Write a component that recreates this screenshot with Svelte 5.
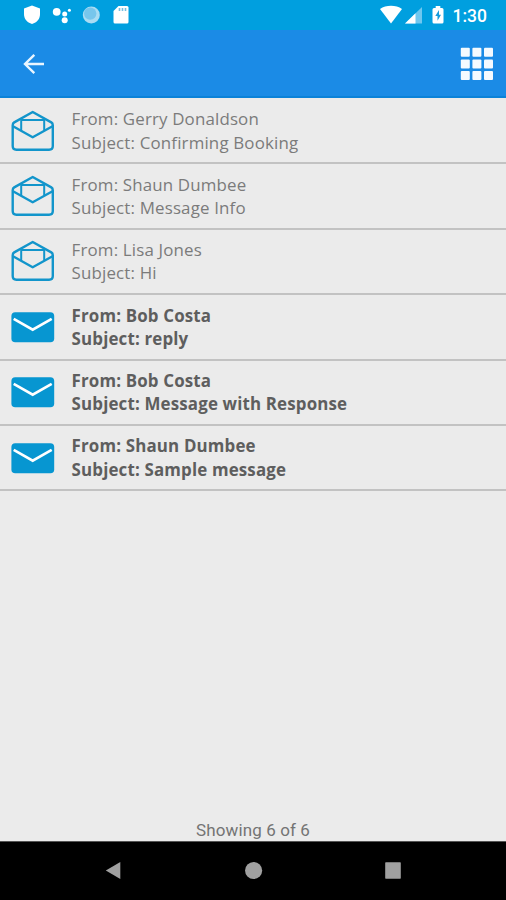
<script>
  const messages = [
    { from: "Gerry Donaldson", subject: "Confirming Booking", read: true },
    { from: "Shaun Dumbee", subject: "Message Info", read: true },
    { from: "Lisa Jones", subject: "Hi", read: true },
    { from: "Bob Costa", subject: "reply", read: false },
    { from: "Bob Costa", subject: "Message with Response", read: false },
    { from: "Shaun Dumbee", subject: "Sample message", read: false },
  ];
</script>

<div class="screen">
  <div class="status-bar">
    <svg class="status-left" width="112" height="30" viewBox="0 0 112 30">
      <!-- Shield -->
      <path d="M8 5.5 L16 8.5 V14 C16 19 13 22.3 8 24 C3 22.3 0 19 0 14 V8.5 Z" fill="#fff" />
      <!-- Assistant dots -->
      <circle cx="32.7" cy="11.8" r="3.9" fill="#fff" />
      <circle cx="40.7" cy="14" r="2.5" fill="#fff" />
      <circle cx="40.7" cy="20.3" r="3" fill="#fff" />
      <circle cx="45.4" cy="10.2" r="1.5" fill="#fff" />
      <!-- Sync circle -->
      <circle cx="67.3" cy="15" r="8.5" fill="#a9dcf3" />
      <circle cx="66.2" cy="13.6" r="6.2" fill="#77c6ec" />
      <!-- SD card -->
      <path d="M94.5 6 H103 Q104.5 6 104.5 7.5 V22 Q104.5 23.5 103 23.5 H91 Q89.5 23.5 89.5 22 V11 Z" fill="#fff" />
      <path d="M95.5 8 V11 M98.5 8 V11 M101.5 8 V11" stroke="#79bfe0" stroke-width="1.6" />
    </svg>
    <div class="status-right">
      <svg width="66" height="30" viewBox="0 0 66 30">
        <path d="M0 9 C6 4.8 16 4.8 22 9 L11 23.5 Z" fill="#fff" />
        <path d="M42 7 V23.5 H25 Z" fill="#6fc7ef" />
        <path d="M35.5 13.3 V23.5 H25 Z" fill="#fff" />
        <path d="M55.7 6 H60.3 V8 H62 Q63.5 8 63.5 9.5 V22 Q63.5 23.5 62 23.5 H54 Q52.5 23.5 52.5 22 V9.5 Q52.5 8 54 8 H55.7 Z" fill="#fff" />
        <path d="M59 10 L55.3 16 H57.5 V20.8 L61 14.8 H59 Z" fill="#159bdc" />
      </svg>
      <span class="clock">1:30</span>
    </div>
  </div>

  <div class="header">
    <button class="icon-button" aria-label="Back">
      <svg width="22" height="22" viewBox="0 0 22 22">
        <path d="M21 11 H2.5 M11.3 1.8 L2 11 L11.3 20.2" fill="none" stroke="#e9f5ff" stroke-width="2.4" />
      </svg>
    </button>
    <button class="icon-button" aria-label="Menu">
      <svg width="34" height="34" viewBox="0 0 34 34">
        {#each [0.8, 12.4, 24] as y}
          {#each [0.8, 12.4, 24] as x}
            <rect {x} {y} width="9" height="9" rx="1" fill="#f5faff" />
          {/each}
        {/each}
      </svg>
    </button>
  </div>

  <div class="messages">
    {#each messages as message}
      <div class="message" class:unread={!message.read}>
        <svg class="envelope" width="44" height="44" viewBox="0 0 44 44">
          {#if message.read}
            <g fill="none" stroke="#1295cb" stroke-width="2.4" stroke-linejoin="round">
              <path d="M1.7 16.2 Q1.7 14.3 3.2 13.4 L21.7 3 L40.3 13.4 Q41.8 14.3 41.8 16.2 V37 Q41.8 40.7 38.1 40.7 H5.4 Q1.7 40.7 1.7 37 Z" />
              <path d="M2 17.2 L21.7 28.2 L41.5 17.2" />
              <path d="M10.2 21.3 V10.9 H33.2 V21.3" stroke-width="2" />
            </g>
          {:else}
            <rect x="0.4" y="7.2" width="42.8" height="30" rx="3.8" fill="#0796d1" />
            <path d="M2.7 13.9 L21.7 24.6 L40.7 13.9" fill="none" stroke="#fff" stroke-width="2.7" />
          {/if}
        </svg>
        <div class="text">
          <div>From: {message.from}</div>
          <div>Subject: {message.subject}</div>
        </div>
      </div>
    {/each}
  </div>

  <div class="footer">Showing 6 of 6</div>

  <div class="nav-bar">
    <svg width="18" height="20" viewBox="0 0 18 20">
      <path d="M0.8 9.5 L15.3 1 V18 Z" fill="#a0a0a0" />
    </svg>
    <svg width="18" height="20" viewBox="0 0 18 20">
      <circle cx="8.6" cy="9.5" r="8.6" fill="#a0a0a0" />
    </svg>
    <svg width="18" height="20" viewBox="0 0 18 20">
      <rect x="1.2" y="1.3" width="15.6" height="16.4" rx="0.6" fill="#a0a0a0" />
    </svg>
  </div>
</div>

<style>
  :global(body) {
    margin: 0;
  }

  .screen {
    display: flex;
    flex-direction: column;
    width: 506px;
    height: 900px;
    overflow: hidden;
    background: #ebebeb;
    font-family: "Open Sans", sans-serif;
  }

  .status-bar {
    display: flex;
    justify-content: space-between;
    height: 30px;
    padding: 0 19px 0 24px;
    background: #009fdf;
  }

  .status-right {
    display: flex;
    gap: 7px;
  }

  .clock {
    color: #fff;
    font-family: Roboto, sans-serif;
    font-size: 17.5px;
    font-weight: 500;
    line-height: 32px;
  }

  .header {
    box-sizing: border-box;
    display: flex;
    justify-content: space-between;
    align-items: center;
    height: 68px;
    padding: 2px 12px 0 23px;
    background: #1b8be6;
    border-bottom: 2px solid #0b82d8;
  }

  .icon-button {
    display: flex;
    padding: 0;
    border: none;
    background: transparent;
    cursor: pointer;
  }

  .messages {
    flex: 1;
    padding-top: 1px;
  }

  .message {
    box-sizing: border-box;
    display: flex;
    align-items: center;
    gap: 17px;
    height: 65.4px;
    padding-left: 10.6px;
    border-bottom: 2px solid #c2c2c2;
    color: #7b7b7b;
    font-size: 16.9px;
    letter-spacing: 0.16px;
    line-height: 23.3px;
  }

  .unread {
    color: #5e5e5e;
    font-weight: 700;
  }

  .text {
    white-space: nowrap;
  }

  .footer {
    height: 22px;
    color: #747474;
    font-family: Roboto, sans-serif;
    font-size: 17px;
    letter-spacing: 0.12px;
    line-height: 22px;
    text-align: center;
  }

  .nav-bar {
    box-sizing: border-box;
    display: flex;
    justify-content: space-between;
    align-items: center;
    height: 59px;
    padding: 0 104px 0 105px;
    background: #000;
    border-top: 1px solid #555;
  }
</style>
